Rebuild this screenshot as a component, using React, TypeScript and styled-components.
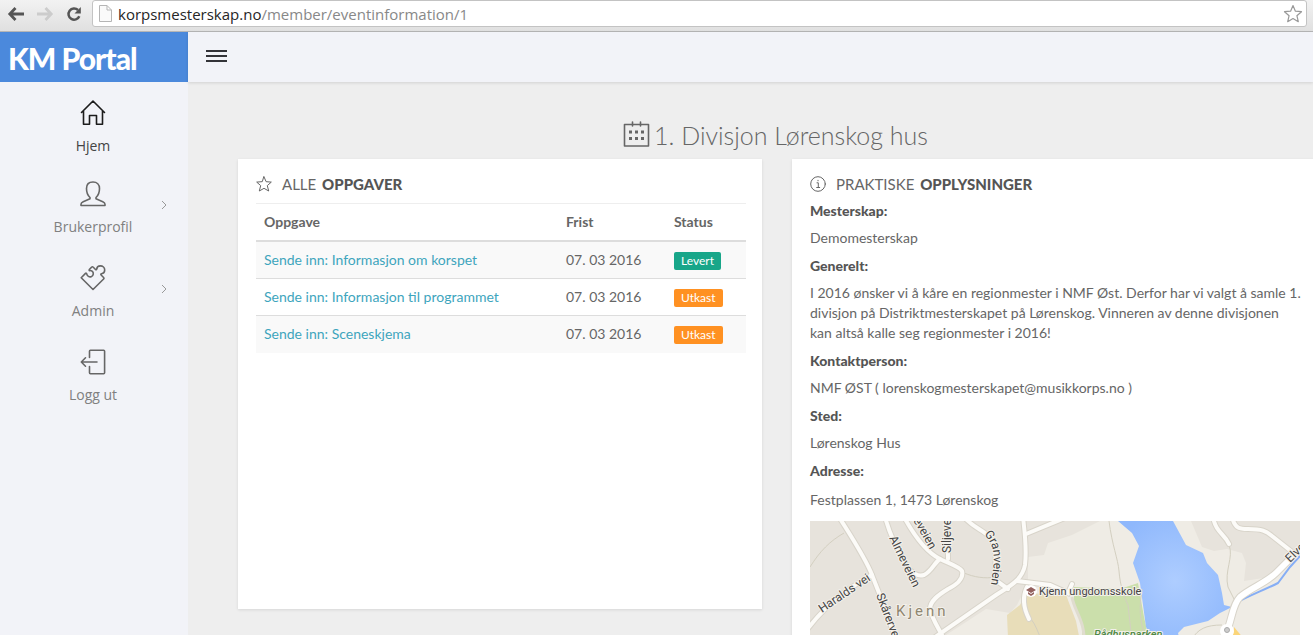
import React from "react";
import styled, { createGlobalStyle } from "styled-components";

const GlobalStyle = createGlobalStyle`
  *, *::before, *::after { box-sizing: border-box; }
  html, body { margin: 0; padding: 0; }
  body {
    background: #eeeeee;
    color: #666666;
    font-family: Lato, "Liberation Sans", sans-serif;
    font-size: 14px;
    line-height: 20px;
  }
`;

const Shell = styled.div`
  display: flex;
  flex-direction: column;
  height: 100vh;
  overflow: hidden;
`;

/* Browser bar */

const BrowserBar = styled.div`
  display: flex;
  align-items: center;
  flex: none;
  height: 32px;
  padding: 0 6px 4px;
  background: linear-gradient(#f2f2f2, #e0e0e0);
  border-bottom: 1px solid #b6b6b6;
`;

const BarButton = styled.button`
  display: flex;
  align-items: center;
  justify-content: center;
  width: 29px;
  height: 24px;
  padding: 0 9px 0 0;
  border: 0;
  background: none;
`;

const AddressBox = styled.form`
  display: flex;
  align-items: center;
  flex: 1;
  height: 27px;
  margin: 0 0 0 -1px;
  padding: 0 3px 0 6px;
  background: #ffffff;
  border: 1px solid #c3c3c3;
  border-radius: 3px;
`;

const AddressField = styled.div`
  display: grid;
  flex: 1;
  margin-left: 6px;
  font: 15px/20px "Open Sans", sans-serif;
  white-space: pre;
  color: #888888;
`;

const Host = styled.span`
  color: #262626;
`;

const StarButton = styled.button`
  display: flex;
  padding: 0;
  border: 0;
  background: none;
`;

/* Portal frame */

const Portal = styled.div`
  display: flex;
  flex: 1;
  min-height: 0;
`;

const Sidebar = styled.aside`
  flex: none;
  width: 188px;
  background: #f2f3f8;
`;

const Brand = styled.a`
  display: flex;
  align-items: center;
  height: 50px;
  padding: 2px 8px 0;
  background: #4b89dc;
  color: #ffffff;
  font-size: 30px;
  font-weight: 900;
  letter-spacing: -1px;
  line-height: 32px;
  text-decoration: none;
`;

const Menu = styled.ul`
  margin: 0;
  padding: 15px 0 0;
  list-style: none;
`;

const MenuItem = styled.li`
  position: relative;
  height: 84px;

  &:first-child { height: 81px; }
`;

const MenuLink = styled.a<{ $active?: boolean }>`
  display: flex;
  flex-direction: column;
  align-items: center;
  gap: 7px;
  padding-right: 2px;
  color: ${(p) => (p.$active ? "#444444" : "#808080")};
  font: 14px/20px "Open Sans", sans-serif;
  text-decoration: none;

  svg { color: ${(p) => (p.$active ? "#1c1c1c" : "#666666")}; }
`;

const MenuArrow = styled.svg`
  position: absolute;
  right: 21px;
  top: 22px;
`;

const Main = styled.div`
  display: flex;
  flex: 1;
  flex-direction: column;
  min-width: 0;
`;

const TopBar = styled.header`
  display: flex;
  align-items: center;
  flex: none;
  height: 50px;
  padding: 0 18px 2px;
  background: #f2f3f8;
  box-shadow: 0 1px 3px rgba(0, 0, 0, 0.12);
`;

const MenuButton = styled.button`
  display: flex;
  padding: 0;
  border: 0;
  background: none;
`;

const Content = styled.main`
  flex: 1;
  min-height: 0;
  overflow: hidden;
  padding: 35px 0 0 50px;
`;

const PageTitle = styled.h1`
  display: flex;
  align-items: center;
  justify-content: center;
  gap: 4px;
  margin: 0;
  height: 42px;
  padding-bottom: 6px;
  color: #666666;
  font-size: 25px;
  font-weight: 300;
  line-height: 36px;

  svg { margin-bottom: 2px; }
`;

const Columns = styled.div`
  display: grid;
  grid-template-columns: 1fr 1fr;
  align-items: start;
  gap: 30px;
  margin-right: -3px;
`;

const Card = styled.section`
  min-height: 450px;
  padding: 15px 16px 15px 18px;
  background: #ffffff;
  box-shadow: 0 1px 3px rgba(0, 0, 0, 0.1);
`;

const CardTitle = styled.h2`
  display: flex;
  align-items: center;
  gap: 10px;
  margin: 0;
  font-size: 15px;
  font-weight: 400;
  line-height: 20px;
  text-transform: uppercase;

  b {
    margin-left: 2px;
    color: #555555;
    font-weight: 900;
  }
`;

/* Task table */

const TaskTable = styled.table`
  width: 100%;
  margin-top: 9px;
  border-collapse: collapse;
  border-top: 1px solid #eeeeee;
  table-layout: fixed;
`;

const HeadCell = styled.th<{ $width?: number }>`
  width: ${(p) => (p.$width ? `${p.$width}px` : "auto")};
  padding: 8px;
  border-bottom: 2px solid #dddddd;
  font-weight: 700;
  text-align: left;
`;

const TaskRow = styled.tr`
  &:nth-child(odd) { background: #f9f9f9; }
  & + & { border-top: 1px solid #dddddd; }
`;

const Cell = styled.td`
  height: 37px;
  padding: 8px;
  white-space: nowrap;
`;

const TaskLink = styled.a`
  color: #3ea5bd;
  text-decoration: none;
`;

const Badge = styled.span<{ $done: boolean }>`
  display: block;
  width: fit-content;
  margin-top: 2px;
  padding: 0 7px;
  border-radius: 2px;
  background: ${(p) => (p.$done ? "#18a689" : "#ff9122")};
  color: #ffffff;
  font-size: 12px;
  line-height: 18px;
`;

/* Event details */

const Details = styled.dl`
  margin: 7px -4px 0 0;
`;

const Term = styled.dt`
  margin-bottom: 7px;
  color: #555555;
  font-weight: 900;
`;

const Value = styled.dd`
  margin: 0 0 8px;
`;

const Address = styled.address`
  padding: 2px 0 3px;
  font-style: normal;
`;

const MapView = styled.svg`
  display: block;
  width: 100%;
  height: 300px;
  font-family: Roboto, sans-serif;
  font-size: 12px;
`;

const MapLabel = styled.text`
  fill: #444444;
  stroke: #f3f0ea;
  stroke-width: 2px;
  paint-order: stroke;
`;

const stroke = {
  fill: "none",
  stroke: "currentColor",
  strokeLinejoin: "round" as const,
  strokeLinecap: "round" as const,
};

const HomeIcon = () => (
  <svg width="26" height="32" viewBox="0 0 26 32" {...stroke} strokeWidth="1.600" aria-hidden="true">
    <path d="M1.500 15.500 13 4l11.500 11.500M3.500 14v13.200h6v-8.700h7v8.700h6V14" />
  </svg>
);

const UserIcon = () => (
  <svg width="26" height="32" viewBox="0 0 26 32" {...stroke} strokeWidth="1.600" aria-hidden="true">
    <path d="M13 4c-4 0-6.500 2.500-6.500 6.500 0 4 1.200 7 3.500 9v1.300l-6.800 2.900c-1.300.6-2.200 1.300-2.200 2.500v1.300h24v-1.300c0-1.200-.9-1.900-2.200-2.500L16 20.800v-1.300c2.300-2 3.500-5 3.500-9C19.500 6.500 17 4 13 4z" />
  </svg>
);

const PuzzleIcon = () => (
  <svg width="26" height="32" viewBox="0 0 26 32" {...stroke} strokeWidth="1.600" aria-hidden="true">
    <path d="M13 27.500 1.200 15.700l4.300-4.300c.5-.5 1-.3 1.200.4.500 2.400 2.600 3.600 4.500 2.900 2.400-.8 2.800-4.200.9-5.500-.7-.5-1.600-.7-2.400-.6-.6 0-.8-.6-.4-1l2.200-2.300c.7-.7 1.200-.7 1.800 0l2.200 2.200c.5.5 1.100.3 1.200-.4.200-2 1.700-3.200 3.700-3.200 2.300 0 4.300 1.900 4.300 4.200 0 2-1.300 3.500-3.200 3.700-.7.1-.9.700-.4 1.200l2.500 2.500c.5.500.5 1 0 1.500z" />
  </svg>
);

const LogoutIcon = () => (
  <svg width="26" height="32" viewBox="0 0 26 32" {...stroke} strokeWidth="1.600" aria-hidden="true">
    <path d="M9.500 11.500V5.200c0-.6.3-.9.900-.9h13.300c.6 0 .9.300.9.900v21.600c0 .6-.3.900-.9.900H10.400c-.6 0-.9-.3-.9-.9v-6.300M17 16H1.500M5.500 11.800 1.300 16l4.200 4.200" />
  </svg>
);

const menu = [
  { label: "Hjem", icon: HomeIcon, active: true },
  { label: "Brukerprofil", icon: UserIcon, nested: true },
  { label: "Admin", icon: PuzzleIcon, nested: true },
  { label: "Logg ut", icon: LogoutIcon },
];

const tasks = [
  { name: "Sende inn: Informasjon om korspet", due: "07. 03 2016", status: "Levert" },
  { name: "Sende inn: Informasjon til programmet", due: "07. 03 2016", status: "Utkast" },
  { name: "Sende inn: Sceneskjema", due: "07. 03 2016", status: "Utkast" },
];

const roads = [
  "M29 -4 C44 20 56 38 62 54 C74 84 84 110 92 140",
  "M62 54 C44 64 20 78 -4 110",
  "M75 -4 C80 14 86 26 92 36 C98 50 106 56 114 54 C122 50 124 42 130 38",
  "M94 -4 C106 18 118 32 130 38 C138 42 150 46 152 50 C154 58 146 64 138 68 C128 74 120 80 120 88 C122 98 128 106 134 118",
  "M138 38 C138 22 136 8 138 -4",
  "M154 -4 C166 10 180 10 184 24 C188 38 184 50 184 58 L198 68",
  "M213 -4 C215 14 217 28 215 44 C212 60 198 66 186 74 L118 121",
  "M216 13 L262 -6",
  "M207 60 L240 64 L258 72 L262 63",
  "M217 66 C212 76 214 88 219 98",
  "M403 -4 C406 12 414 12 419 23",
  "M422 -4 C425 8 430 8 438 8 C452 8 456 10 462 15 L481 30",
];

const AreaMap = () => (
  <MapView viewBox="0 0 491 300" preserveAspectRatio="xMinYMin slice" role="img" aria-label="Kart over Kjenn">
    <defs>
      <radialGradient id="lake" cx="0.5" cy="0.5" r="0.6">
        <stop offset="0" stopColor="#aecdff" />
        <stop offset="1" stopColor="#8fb8fc" />
      </radialGradient>
    </defs>
    <rect width="491" height="300" fill="#efece5" />
    <path d="M0 0H290L262 14 238 22 234 34 218 36V62L207 84 200 92 176 88 130 118 110 300H0z" fill="#e7e3dc" />
    <path d="M381 0 392 26 404 30 417 28 432 32 436 42 434 60 460 56 481 40 491 28V0z" fill="#e7e3dc" />
    <path d="M197 94 210 84 216 72 256 74 266 100 270 120V300H206z" fill="#e8ddb9" />
    <path d="M264 66 310 68 328 62 334 96 338 114 360 125V300H280L272 106 264 82z" fill="#cbdfab" />
    <path d="M308 0H363L376 24 393 32 397 42 408 54 412 72 414 84 422 86 410 92 398 100 374 106 368 112 370 120 344 120 336 106 330 62 323 42 329 25 322 12z" fill="url(#lake)" />
    <g fill="none" stroke="#d3cfc0" strokeWidth="1">
      <path d="M0 46C10 30 20 20 34 12M154 52C164 56 174 58 186 56M299 0C302 24 308 38 309 50C310 64 314 76 318 84L322 120M332 68C330 84 328 96 336 118M419 24C424 36 414 50 418 66L424 78M382 118C388 108 396 104 412 104M221 98C226 104 228 112 232 120" />
    </g>
    <path d="M262 76C264 90 276 100 274 125" fill="none" stroke="#e0dccf" strokeWidth="3" />
    <path d="M424 83C440 74 452 70 468 62L480 46 491 34" fill="none" stroke="#86aef5" strokeWidth="2" />
    <g fill="none" stroke="#d8d4ca" strokeWidth="6" strokeLinecap="round">
      {roads.map((d) => <path key={d} d={d} />)}
    </g>
    <g fill="none" stroke="#fcfbf8" strokeWidth="4" strokeLinecap="round">
      {roads.map((d) => <path key={d} d={d} />)}
    </g>
    <path d="M416 112C422 100 422 84 430 76C442 66 456 62 466 52L484 34" fill="none" stroke="#d8d4ca" strokeWidth="8" />
    <path d="M416 112C422 100 422 84 430 76C442 66 456 62 466 52L484 34" fill="none" stroke="#ffffff" strokeWidth="6" />
    <path d="M424 106 434 118 422 122z" fill="#fbd579" />
    <circle cx="417" cy="110" r="7" fill="#ffffff" />
    <circle cx="417" cy="109" r="2.500" fill="#cccccc" stroke="#aaaaaa" />
    <MapLabel transform="translate(12 92) rotate(-34)">Haralds vei</MapLabel>
    <MapLabel transform="translate(66 74) rotate(69)">Skårerveien</MapLabel>
    <MapLabel transform="translate(79 17) rotate(64)">Almeveien</MapLabel>
    <MapLabel transform="translate(100 -6) rotate(60)">keveien</MapLabel>
    <MapLabel transform="translate(141 32) rotate(-90)">Siljeveien</MapLabel>
    <path id="granveien" d="M174 13C184 24 186 34 181 62" fill="none" />
    <MapLabel><textPath href="#granveien">Granveien</textPath></MapLabel>
    <MapLabel transform="translate(480 42) rotate(-44)">Elvegata</MapLabel>
    <MapLabel x="86" y="95" fontSize="15" letterSpacing="3" style={{ fill: "#8f8670" }}>Kjenn</MapLabel>
    <circle cx="221" cy="70" r="6" fill="#ffffff" />
    <path d="M216 69 221 66 226 69 221 72zM218 71v2l3 2 3-2v-2l-3 2z" fill="#93615e" />
    <MapLabel x="229" y="74" fontSize="11">Kjenn ungdomsskole</MapLabel>
    <MapLabel x="284" y="117" fontSize="11" fontStyle="italic" fontWeight="500" style={{ fill: "#4f8a45" }}>Rådhusparken</MapLabel>
  </MapView>
);

export default function App() {
  return (
    <Shell>
      <GlobalStyle />
      <BrowserBar>
        <BarButton type="button" aria-label="Tilbake">
          <svg width="18" height="16" viewBox="0 0 18 16" fill="none" stroke="#555555" strokeWidth="2.800">
            <path d="M8.500 2 2.800 8l5.700 6M3 8h14" />
          </svg>
        </BarButton>
        <BarButton type="button" aria-label="Fremover">
          <svg width="18" height="16" viewBox="0 0 18 16" fill="none" stroke="#cccccc" strokeWidth="2.800">
            <path d="M9.500 2 15.200 8l-5.700 6M15 8H1" />
          </svg>
        </BarButton>
        <BarButton type="button" aria-label="Last inn på nytt">
          <svg width="18" height="16" viewBox="0 0 18 16" fill="none" stroke="#555555" strokeWidth="2.500">
            <path d="M14.300 10.200A5.600 5.600 0 1 1 13 4" />
            <path d="M15.800 1v6.500H9.500z" fill="#555555" stroke="none" />
          </svg>
        </BarButton>
        <AddressBox>
          <svg width="13" height="17" viewBox="0 0 13 17" fill="#fafafa" stroke="#b5b5b5" aria-hidden="true">
            <path d="M.5.500h7.500l4.500 4.500v11.500H.5zM8 .5V5h4.500" />
          </svg>
          <AddressField>
            <span><Host>korpsmesterskap.no</Host>/member/eventinformation/1</span>
          </AddressField>
          <StarButton type="button" aria-label="Bokmerke">
            <svg width="20" height="20" viewBox="0 0 20 20" fill="#ffffff" stroke="#999999" strokeWidth="1.200" strokeLinejoin="round">
              <path d="M10 1.500 12.400 7.200l6.100.5-4.600 4 1.400 6-5.300-3.200-5.300 3.200 1.400-6-4.600-4 6.100-.5z" />
            </svg>
          </StarButton>
        </AddressBox>
      </BrowserBar>

      <Portal>
        <Sidebar>
          <Brand href="#">KM Portal</Brand>
          <nav>
            <Menu>
              {menu.map(({ label, icon: Icon, active, nested }) => (
                <MenuItem key={label}>
                  <MenuLink href="#" $active={active}>
                    <Icon />
                    {label}
                  </MenuLink>
                  {nested && (
                    <MenuArrow width="6" height="10" viewBox="0 0 6 10" fill="none" stroke="#999999" aria-hidden="true">
                      <path d="M1 1l4 4-4 4" />
                    </MenuArrow>
                  )}
                </MenuItem>
              ))}
            </Menu>
          </nav>
        </Sidebar>

        <Main>
          <TopBar>
            <MenuButton type="button" aria-label="Meny">
              <svg width="21" height="14" viewBox="0 0 21 14" fill="#333338">
                <path d="M0 1h21v2H0zM0 6h21v2H0zM0 11h21v2H0z" />
              </svg>
            </MenuButton>
          </TopBar>
          <Content>
            <PageTitle>
              <svg width="27" height="26" viewBox="0 0 27 26" {...stroke} strokeWidth="1.600" aria-hidden="true">
                <path d="M1.500 3.500h24v21.500h-24zM9.500 1v4M17.500 1v4" />
                <path d="M6 9.500h3v3H6zM12 9.500h3v3h-3zM18 9.500h3v3h-3zM6 16h3v3H6zM12 16h3v3h-3zM18 16h3v3h-3z" fill="currentColor" stroke="none" />
              </svg>
              1. Divisjon Lørenskog hus
            </PageTitle>
            <Columns>
              <Card>
                <CardTitle>
                  <svg width="16" height="16" viewBox="0 0 16 16" {...stroke} aria-hidden="true">
                    <path d="M8 .8l2.100 4.900 5.200.4-4 3.500 1.400 5.400L8 12.300 3.300 15l1.400-5.400-4-3.500 5.200-.4z" />
                  </svg>
                  <span>Alle <b>oppgaver</b></span>
                </CardTitle>
                <TaskTable>
                  <thead>
                    <tr>
                      <HeadCell scope="col">Oppgave</HeadCell>
                      <HeadCell scope="col" $width={108}>Frist</HeadCell>
                      <HeadCell scope="col" $width={80}>Status</HeadCell>
                    </tr>
                  </thead>
                  <tbody>
                    {tasks.map((task) => (
                      <TaskRow key={task.name}>
                        <Cell><TaskLink href="#">{task.name}</TaskLink></Cell>
                        <Cell>{task.due}</Cell>
                        <Cell><Badge $done={task.status === "Levert"}>{task.status}</Badge></Cell>
                      </TaskRow>
                    ))}
                  </tbody>
                </TaskTable>
              </Card>
              <Card>
                <CardTitle>
                  <svg width="16" height="16" viewBox="0 0 16 16" {...stroke} aria-hidden="true">
                    <circle cx="8" cy="8" r="7.300" />
                    <path d="M7 6.800h1.300v4.700M6.700 11.500h3M8 4.300v.5" />
                  </svg>
                  <span>Praktiske <b>opplysninger</b></span>
                </CardTitle>
                <Details>
                  <Term>Mesterskap:</Term>
                  <Value>Demomesterskap</Value>
                  <Term>Generelt:</Term>
                  <Value>
                    I 2016 ønsker vi å kåre en regionmester i NMF Øst. Derfor har vi valgt å samle 1.
                    divisjon på Distriktmesterskapet på Lørenskog. Vinneren av denne divisjonen
                    kan altså kalle seg regionmester i 2016!
                  </Value>
                  <Term>Kontaktperson:</Term>
                  <Value>NMF ØST ( lorenskogmesterskapet@musikkorps.no )</Value>
                  <Term>Sted:</Term>
                  <Value>Lørenskog Hus</Value>
                  <Term>Adresse:</Term>
                  <Value><Address>Festplassen 1, 1473 Lørenskog</Address></Value>
                </Details>
                <AreaMap />
              </Card>
            </Columns>
          </Content>
        </Main>
      </Portal>
    </Shell>
  );
}
